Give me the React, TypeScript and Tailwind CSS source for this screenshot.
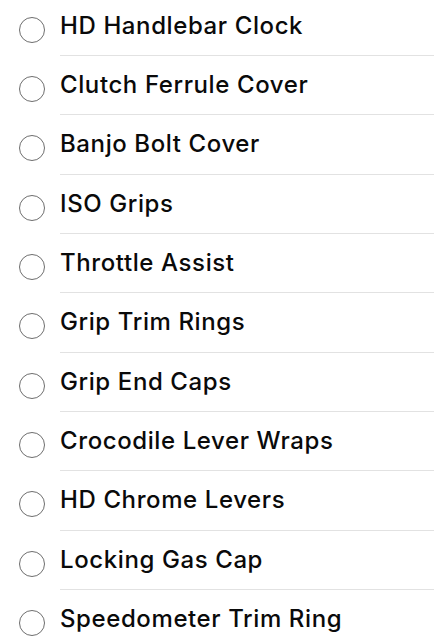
import React from 'react';

const ITEMS = [
  'HD Handlebar Clock',
  'Clutch Ferrule Cover',
  'Banjo Bolt Cover',
  'ISO Grips',
  'Throttle Assist',
  'Grip Trim Rings',
  'Grip End Caps',
  'Crocodile Lever Wraps',
  'HD Chrome Levers',
  'Locking Gas Cap',
  'Speedometer Trim Ring',
];

const App: React.FC = () => {
  return (
    <div className="w-[434px] h-[640px] overflow-hidden bg-white" style={{ fontFamily: 'Inter, "Liberation Sans", sans-serif' }}>
      <ul className="-mt-[3.33px]">
        {ITEMS.map(item => (
          <li key={item} className="flex items-center pl-[19px]">
            <span className="w-[26px] h-[26px] shrink-0 rounded-full border-[1.5px] border-[#6e6e6e] mt-[7px]" />
            <div className="flex-1 ml-[15px] h-[59.33px] flex items-center border-b border-[#e2e2e2]">
              <span className="text-[24px] font-medium tracking-[0.6px] text-[#0a0a0a] leading-none">{item}</span>
            </div>
          </li>
        ))}
      </ul>
    </div>
  );
};

export default App;
